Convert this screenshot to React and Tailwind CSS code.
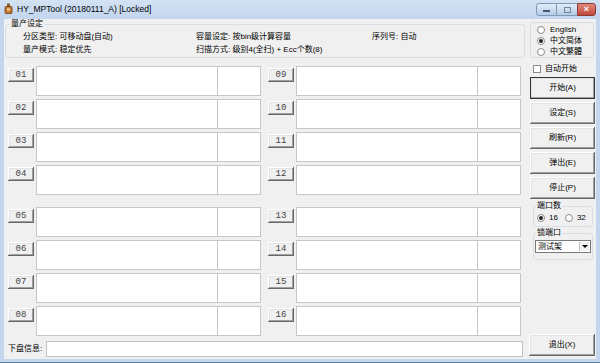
import React from 'react';

const LEFT = ['01', '02', '03', '04', '05', '06', '07', '08'];
const RIGHT = ['09', '10', '11', '12', '13', '14', '15', '16'];

const FONT = "font-['Liberation_Sans','Noto_Sans_CJK_SC',sans-serif]";

// classic raised 3D button face
const RAISED =
  'bg-[#f0f0f0] shadow-[inset_-1px_-1px_0_#696969,inset_1px_1px_0_#ffffff,inset_-2px_-2px_0_#a0a0a0,inset_2px_2px_0_#e3e3e3]';

function Radio({ checked }) {
  return (
    <span className="flex h-[8px] w-[8px] shrink-0 items-center justify-center rounded-full border border-[#8a8a8a] bg-white">
      {checked && <span className="h-[4px] w-[4px] rounded-full bg-[#222]" />}
    </span>
  );
}

function SlotRow({ id, className = '' }) {
  return (
    <div className={`flex h-[30px] gap-[2px] ${className}`}>
      <div
        className={`mt-[2px] flex h-[14px] w-[26px] shrink-0 items-center justify-center ${RAISED} font-['Liberation_Mono',monospace] text-[9px] leading-none text-[#444]`}
      >
        {id}
      </div>
      <div className="flex flex-1 border border-[#c6c6c6] bg-white">
        <div className="flex-1" />
        <div className="w-[43px] border-l border-[#c6c6c6]" />
      </div>
    </div>
  );
}

function SlotColumn({ ids, className = '' }) {
  return (
    <div className={`flex w-[253px] flex-col gap-[3px] ${className}`}>
      {ids.map((id, i) => (
        <SlotRow key={id} id={id} className={i === 4 ? 'mt-[9px]' : ''} />
      ))}
    </div>
  );
}

function SideButton({ children, primary }) {
  return (
    <div
      className={`flex h-[22px] items-center justify-center ${RAISED} ${
        primary ? 'outline outline-1 -outline-offset-1 outline-[#333]' : ''
      }`}
    >
      {children}
    </div>
  );
}

function TitleIcon() {
  return (
    <svg width="9" height="11" viewBox="0 0 9 11" className="shrink-0">
      <rect x="3" y="0.5" width="3" height="3" fill="#8a5a2b" />
      <rect x="1" y="3.5" width="7" height="7" rx="1" fill="#c8772e" stroke="#6b3d14" strokeWidth="0.8" />
      <rect x="3" y="5.5" width="3" height="2" fill="#f3d9a8" />
    </svg>
  );
}

export default function App() {
  return (
    <div className={`flex h-[363px] w-[600px] flex-col bg-[#c3d6ee] ${FONT} text-black`}>
      {/* title bar */}
      <div className="flex h-[19px] shrink-0 items-start bg-gradient-to-b from-[#d3e2f4] to-[#c2d6ee] pl-[4px] pt-[3px] pr-[4px]">
        <TitleIcon />
        <span className="ml-[4px] text-[8.5px] leading-[12px] font-['Liberation_Sans',sans-serif]">
          HY_MPTool (20180111_A) [Locked]
        </span>
        <div className="ml-auto flex h-[13px]">
          <div className="flex w-[21px] items-center justify-center rounded-l-[3px] border border-[#7f98b8] bg-gradient-to-b from-[#e3edf9] to-[#b7cbe4]">
            <span className="mt-[3px] h-[2px] w-[7px] bg-[#3f5877]" />
          </div>
          <div className="flex w-[20px] items-center justify-center border-y border-[#7f98b8] bg-gradient-to-b from-[#e3edf9] to-[#b7cbe4]">
            <span className="h-[6px] w-[7px] border border-[#6f86a5]" />
          </div>
          <div className="flex w-[19px] items-center justify-center rounded-r-[3px] border border-[#8b3a32] bg-gradient-to-b from-[#e08a7c] to-[#c2463a] text-[9px] font-bold leading-none text-white">
            ×
          </div>
        </div>
      </div>

      <div className="flex flex-1">
        <div className="w-[4px]" />
        {/* client area */}
        <div className="flex w-[592px] flex-col bg-[#f0f0f0] text-[8px]">
          {/* top settings */}
          <div className="flex">
            <fieldset className="ml-[1px] w-[520px] rounded-[3px] border border-[#d5dfe5]">
              <legend className="ml-[4px] px-[1px] leading-[10px]">量产设定</legend>
              <div className="grid grid-cols-[173px_176px_1fr] pl-[17px] pt-[1px] pb-[1px] leading-[13px]">
                <span>分区类型: 可移动盘(自动)</span>
                <span>容量设定: 按bin级计算容量</span>
                <span>序列号: 自动</span>
                <span>量产模式: 稳定优先</span>
                <span>扫描方式: 级别4(全扫) + Ecc个数(8)</span>
                <span />
              </div>
            </fieldset>
            <div className="ml-[5px] mt-[3px] h-[36px] w-[64px] rounded-[3px] border border-[#d5dfe5] pl-[6px] pt-[1px]">
              {[
                ['English', false],
                ['中文简体', true],
                ['中文繁體', false],
              ].map(([label, on]) => (
                <div key={label} className="flex h-[11.3px] items-center gap-[5px]">
                  <Radio checked={on} />
                  <span>{label}</span>
                </div>
              ))}
            </div>
          </div>

          {/* main area */}
          <div className="mt-[6px] flex flex-1">
            <div className="ml-[4px] flex w-[515px] flex-col pt-[2px]">
              <div className="flex">
                <SlotColumn ids={LEFT} />
                <SlotColumn ids={RIGHT} className="ml-[7px]" />
              </div>
              <div className="mt-[5px] flex items-center">
                <span className="w-[38px] shrink-0 whitespace-nowrap">下盘信息:</span>
                <div className="h-[16px] flex-1 border border-[#bfc3c8] bg-white" />
              </div>
            </div>

            <div className="ml-[6px] flex w-[66px] flex-col">
              <div className="flex h-[10px] items-center gap-[4px] pl-[4px]">
                <span className="h-[8px] w-[8px] border border-[#8a8a8a] bg-white" />
                <span>自动开始</span>
              </div>
              <div className="mt-[3px] flex flex-col gap-[3px] pl-[1px]">
                <SideButton primary>开始(A)</SideButton>
                <SideButton>设定(S)</SideButton>
                <SideButton>刷新(R)</SideButton>
                <SideButton>弹出(E)</SideButton>
                <SideButton>停止(P)</SideButton>
              </div>
              <fieldset className="ml-[4px] mt-[2px] w-[60px] rounded-[3px] border border-[#d5dfe5]">
                <legend className="ml-[2px] px-[1px] leading-[10px]">端口数</legend>
                <div className="flex h-[15px] items-center pl-[3px] pb-[2px]">
                  <Radio checked />
                  <span className="ml-[4px]">16</span>
                  <span className="ml-[7px]">
                    <Radio />
                  </span>
                  <span className="ml-[4px]">32</span>
                </div>
              </fieldset>
              <fieldset className="ml-[4px] mt-[1px] w-[60px] rounded-[3px] border border-[#d5dfe5] pb-[6px]">
                <legend className="ml-[2px] px-[1px] leading-[10px]">锁端口</legend>
                <div className="mx-[1px] mt-[2px] flex h-[13px] border border-[#7a7a7a] bg-white">
                  <span className="flex-1 pl-[2px] leading-[11px]">测试架</span>
                  <span className="m-[1px] flex w-[10px] items-center justify-center border-l border-[#c0c0c0] bg-[#f0f0f0]">
                    <span className="h-0 w-0 border-x-[3px] border-t-[3px] border-x-transparent border-t-black" />
                  </span>
                </div>
              </fieldset>
              <div className="mb-[3px] mt-auto">
                <SideButton>退出(X)</SideButton>
              </div>
            </div>
          </div>
        </div>
        <div className="w-[4px]" />
      </div>
      <div className="h-[4px] shrink-0 border-b border-[#5f7fa6]" />
    </div>
  );
}
